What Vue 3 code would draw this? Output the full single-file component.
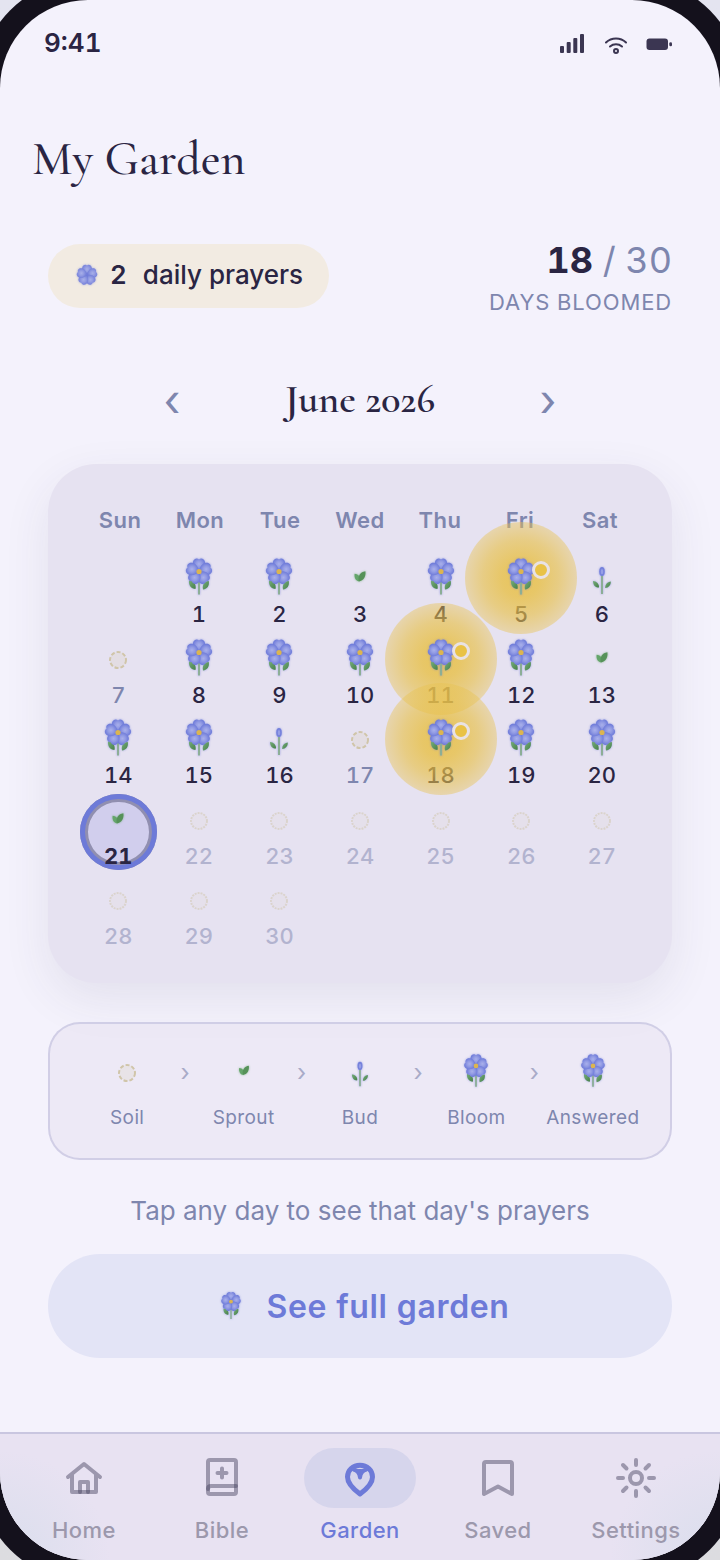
<script setup>
import { ref } from 'vue'

const weekdays = ['Sun', 'Mon', 'Tue', 'Wed', 'Thu', 'Fri', 'Sat']
const stages = [
  'bloom', 'bloom', 'sprout', 'bloom', 'answered', 'bud', 'soil', 'bloom', 'bloom', 'bloom',
  'answered', 'bloom', 'sprout', 'bloom', 'bloom', 'bud', 'soil', 'answered', 'bloom', 'bloom',
  'sprout'
]
const today = 21
const days = Array.from({ length: 30 }, (_, i) => ({
  number: i + 1,
  stage: stages[i] || 'future'
}))
const legend = [
  { stage: 'soil', label: 'Soil' },
  { stage: 'sprout', label: 'Sprout' },
  { stage: 'bud', label: 'Bud' },
  { stage: 'bloom', label: 'Bloom' },
  { stage: 'bloom', label: 'Answered' }
]
const tabs = ['Home', 'Bible', 'Garden', 'Saved', 'Settings']
const active = ref('Garden')
const symbolFor = (stage) => (stage === 'answered' ? 'bloom' : stage)
const isEmpty = (stage) => stage === 'soil' || stage === 'future'
</script>

<template>
  <div class="screen">
    <svg class="defs" width="0" height="0" aria-hidden="true">
      <defs>
        <radialGradient id="petal-fill" gradientUnits="userSpaceOnUse" cx="0" cy="-7.5" r="6.5">
          <stop offset="0" stop-color="#a9b0eb" />
          <stop offset="0.45" stop-color="#929be4" />
          <stop offset="1" stop-color="#6b78d8" />
        </radialGradient>
        <linearGradient id="leaf-fill" x1="0" y1="0" x2="1" y2="1">
          <stop offset="0" stop-color="#76ad7a" />
          <stop offset="1" stop-color="#478049" />
        </linearGradient>
        <path id="petal" fill="url(#petal-fill)" d="M0 0C-4-2-7-5.500-6-9.500C-5.400-12.600-2-13.900 0-12C2-13.900 5.400-12.600 6-9.500C7-5.500 4-2 0 0Z" />
        <g id="blossom">
          <use href="#petal" />
          <use href="#petal" transform="rotate(72)" />
          <use href="#petal" transform="rotate(144)" />
          <use href="#petal" transform="rotate(216)" />
          <use href="#petal" transform="rotate(288)" />
        </g>
        <symbol id="bloom" viewBox="0 0 40 40">
          <path d="M20 24V38.500" stroke="#8cae96" stroke-width="2" />
          <path d="M16.500 33C12 33 9.500 29 10 24.500C14.500 25 17.500 28 16.500 33Z" fill="url(#leaf-fill)" />
          <path d="M24 33.500C28.500 33 30.500 29.500 29.800 25C25.500 25.500 23 28.500 24 33.500Z" fill="url(#leaf-fill)" />
          <use href="#blossom" transform="translate(20 15.500)" />
          <circle cx="20" cy="15.500" r="2.600" fill="#dcb550" />
        </symbol>
        <symbol id="bud" viewBox="0 0 40 40">
          <path d="M20 18V38" stroke="#8cae96" stroke-width="2" />
          <path d="M17 31.500C13.500 32 11 29 11 25C14.500 25 17.300 28 17 31.500Z" fill="url(#leaf-fill)" />
          <path d="M23.200 32C26.500 32 29 29 28.800 25.500C25.500 25.800 23 28.500 23.200 32Z" fill="url(#leaf-fill)" />
          <ellipse cx="20" cy="15.500" rx="2.800" ry="4.600" fill="#7682dc" />
          <ellipse cx="20" cy="15.700" rx="1.200" ry="2.600" fill="#979fe6" />
        </symbol>
        <symbol id="sprout" viewBox="0 0 40 40">
          <path d="M19.600 25.500C16 25.500 14 22 14.600 17.800C18.500 18 20.700 21 19.600 25.500Z" fill="#65a56b" />
          <path d="M18.800 25.300C17.500 20 20.500 16 25.400 15.300C26 20.500 23.800 25 18.800 25.300Z" fill="#569259" />
        </symbol>
      </defs>
    </svg>

    <header class="status">
      <span class="clock">9:41</span>
      <span class="signals" aria-hidden="true">
        <svg width="24" height="20" viewBox="0 0 24 20" fill="#3b3652">
          <rect x="0" y="12" width="4" height="7" rx="1" />
          <rect x="6.700" y="8" width="4" height="11" rx="1" />
          <rect x="13.300" y="4" width="4" height="15" rx="1" />
          <rect x="20" y="0" width="4" height="19" rx="1" />
        </svg>
        <svg width="24" height="20" viewBox="0 0 24 20" fill="none" stroke="#3b3652" stroke-width="2" stroke-linecap="round">
          <path d="M3 8.500C8.500 3.200 17.500 3.200 23 8.500" />
          <path d="M7 12.500C10.500 9.500 15.500 9.500 19 12.500" />
          <circle cx="13" cy="17" r="2" />
        </svg>
        <svg width="26" height="20" viewBox="0 0 26 20" fill="#3b3652">
          <rect x="0.500" y="4.500" width="21.500" height="11.500" rx="3" />
          <rect x="23.300" y="8.200" width="2.700" height="4" rx="1.300" />
        </svg>
      </span>
    </header>

    <main class="content">
      <h1>My Garden</h1>

      <section class="summary">
        <p class="pill">
          <svg class="plant-icon" width="22" height="22" viewBox="-14 -14 28 28" aria-hidden="true"><use href="#blossom" opacity="0.9" /></svg>
          <strong>2</strong>
          <span>daily prayers</span>
        </p>
        <p class="bloomed">
          <span class="count"><strong>18</strong> / 30</span>
          <span class="caption">DAYS BLOOMED</span>
        </p>
      </section>

      <div class="month">
        <button type="button" aria-label="Previous month">‹</button>
        <h2>June 2026</h2>
        <button type="button" aria-label="Next month">›</button>
      </div>

      <section class="calendar">
        <div class="weekdays">
          <span v-for="name in weekdays" :key="name">{{ name }}</span>
        </div>
        <div class="days">
          <span></span>
          <button
            v-for="day in days"
            :key="day.number"
            type="button"
            class="day"
            :class="[day.stage, { today: day.number === today }]"
          >
            <span class="plant">
              <i v-if="day.stage === 'answered'" class="glow"></i>
              <svg v-if="isEmpty(day.stage)" class="soil-icon" :class="day.stage" width="20" height="20" viewBox="0 0 20 20">
                <circle cx="10" cy="10" r="8" />
              </svg>
              <svg v-else class="plant-icon" width="40" height="40"><use :href="'#' + symbolFor(day.stage)" /></svg>
              <i v-if="day.stage === 'answered'" class="badge"></i>
            </span>
            <span class="number">{{ day.number }}</span>
          </button>
        </div>
      </section>

      <section class="legend">
        <template v-for="(item, index) in legend" :key="item.label">
          <span v-if="index" class="arrow" aria-hidden="true">›</span>
          <div class="stage" :class="item.stage">
            <span class="stage-icon">
              <svg v-if="item.stage === 'soil'" class="soil-icon soil" width="20" height="20" viewBox="0 0 20 20">
                <circle cx="10" cy="10" r="8" />
              </svg>
              <svg v-else class="plant-icon" width="36" height="36"><use :href="'#' + item.stage" /></svg>
            </span>
            <span>{{ item.label }}</span>
          </div>
        </template>
      </section>

      <p class="hint">Tap any day to see that day's prayers</p>

      <button type="button" class="full">
        <svg class="plant-icon" width="30" height="30" aria-hidden="true"><use href="#bloom" /></svg>
        <span>See full garden</span>
      </button>
    </main>

    <nav class="tabs">
      <a v-for="tab in tabs" :key="tab" href="#" :class="{ active: tab === active }" @click.prevent="active = tab">
        <span class="tab-icon">
          <svg width="40" height="40" viewBox="0 0 40 40">
            <template v-if="tab === 'Home'">
              <path d="M4 19L20 6L36 19M8 16V34H32V16" />
              <path d="M16 34V24H24V34" />
            </template>
            <template v-else-if="tab === 'Bible'">
              <path d="M8 2H32Q34 2 34 4V34Q34 36 32 36H8Q6 36 6 34V4Q6 2 8 2Z" />
              <path d="M6 31Q6 28 9 28H34M20 10.500V19.500M15.500 15H24.500" />
            </template>
            <template v-else-if="tab === 'Garden'">
              <path stroke-width="5" d="M20 36C12.500 30.500 7.500 25.500 7.500 19C7.500 12 13 7.300 20 7.300C27 7.300 32.500 12 32.500 19C32.500 25.500 27.500 30.500 20 36Z" />
              <path stroke-width="4" d="M20 19.500C19.500 15.500 17.500 12.300 13.500 11.500M20 19.500C20.500 15.500 22.500 12.300 26.500 11.500M18.500 13H21.500" />
            </template>
            <template v-else-if="tab === 'Saved'">
              <path d="M8 4H32Q34 4 34 6V36L20 28.500L6 36V6Q6 4 8 4Z" />
            </template>
            <template v-else>
              <circle cx="20" cy="20" r="6" />
              <path d="M20 2V7M20 33V38M2 20H7M33 20H38M7 7L10.500 10.500M29.500 29.500L33 33M7 33L10.500 29.500M29.500 10.500L33 7" />
            </template>
          </svg>
        </span>
        <span>{{ tab }}</span>
      </a>
    </nav>
  </div>
</template>

<style>
body {
  background: linear-gradient(#e4e4f0, #dcdce0);
}
</style>

<style scoped>
.screen {
  --ink: #2a2543;
  --muted: #7e86ae;
  --accent: #6d7ad8;
  box-sizing: border-box;
  display: flex;
  flex-direction: column;
  min-height: 100vh;
  overflow: hidden;
  border-radius: 88px;
  background: #f4f2fc;
  box-shadow: 0 0 0 22px #14111c;
  color: var(--ink);
  font-family: Inter, "Liberation Sans", sans-serif;
  font-variant-numeric: tabular-nums;
}
.defs {
  position: absolute;
}
h1,
h2,
p {
  margin: 0;
}
h1,
h2 {
  font-family: "Cormorant Garamond", "Liberation Serif", serif;
  font-variant-numeric: normal;
}
button {
  padding: 0;
  border: 0;
  background: none;
  color: inherit;
  font: inherit;
  font-variant-numeric: inherit;
  cursor: pointer;
}
.status {
  display: flex;
  justify-content: space-between;
  align-items: center;
  height: 84px;
  padding: 0 48px 0 44px;
}
.clock {
  font-size: 26px;
  font-weight: 600;
}
.signals {
  display: flex;
  gap: 19px;
  margin-top: 3px;
}
.content {
  display: flex;
  flex-direction: column;
  padding: 45px 48px 74px;
}
h1 {
  margin-left: -16px;
  font-size: 48px;
  font-weight: 500;
  line-height: 60px;
}
.summary {
  display: flex;
  justify-content: space-between;
  align-items: center;
  height: 80px;
  margin-top: 47px;
}
.pill {
  box-sizing: border-box;
  display: flex;
  align-items: center;
  height: 64px;
  padding: 0 26px 3px 28px;
  border-radius: 32px;
  background: #f2ebe2;
  font-size: 26px;
  font-weight: 500;
}
.pill strong {
  margin: 0 16px 0 12px;
  font-weight: 600;
}
.bloomed {
  display: flex;
  flex-direction: column;
  align-items: flex-end;
  color: var(--muted);
}
.count {
  font-size: 36px;
  line-height: 52px;
}
.count strong {
  color: var(--ink);
  font-weight: 700;
}
.caption {
  font-size: 22px;
  line-height: 32px;
  letter-spacing: 0.04em;
}
.month {
  display: flex;
  justify-content: space-between;
  align-items: center;
  height: 64px;
  margin-top: 52px;
  padding: 0 92px;
}
.month h2 {
  padding-bottom: 2px;
  font-size: 40px;
  font-weight: 600;
  line-height: 48px;
}
.month button {
  width: 64px;
  height: 64px;
  color: var(--muted);
  font-size: 44px;
  line-height: 60px;
}
.calendar {
  margin-top: 32px;
  padding: 32px;
  border-radius: 48px;
  background: #e6e2f1;
  box-shadow: 0 16px 48px rgba(60, 55, 90, 0.09);
}
.weekdays {
  display: grid;
  grid-template-columns: repeat(7, 1fr);
  height: 56px;
  color: var(--muted);
  font-size: 22px;
  font-weight: 600;
  line-height: 48px;
  letter-spacing: 0.02em;
  text-align: center;
}
.days {
  display: grid;
  grid-template-columns: repeat(7, 1fr);
  gap: 4px;
}
.day {
  box-sizing: border-box;
  display: flex;
  flex-direction: column;
  align-items: center;
  aspect-ratio: 1;
  padding-top: 4px;
  border-radius: 50%;
  font-size: 22px;
  font-weight: 500;
}
.plant {
  position: relative;
  display: flex;
  justify-content: center;
  width: 40px;
  height: 40px;
}
.plant-icon {
  position: relative;
  z-index: 2;
  overflow: visible;
  filter: drop-shadow(0 0 1px rgba(109, 122, 216, 0.6));
}
.sprout .plant-icon {
  filter: drop-shadow(0 0 1px rgba(90, 160, 96, 0.6));
}
.soil-icon {
  margin-top: 13px;
  fill: rgba(214, 203, 175, 0.2);
  stroke: #d0c5a9;
  stroke-width: 2;
}
.soil-icon.soil {
  stroke-dasharray: 4 2;
}
.soil-icon.future {
  stroke-dasharray: 2 1;
  opacity: 0.5;
}
.number {
  line-height: 28px;
  margin-top: 4px;
}
.day.soil .number {
  color: var(--muted);
}
.day.future .number {
  color: #b2b3cf;
}
.glow {
  position: absolute;
  top: -34px;
  left: -36px;
  z-index: 1;
  width: 112px;
  height: 112px;
  border-radius: 50%;
  background: radial-gradient(circle closest-side, rgba(232, 192, 70, 0.88) 0, rgba(232, 192, 70, 0.8) 35%, rgba(232, 193, 74, 0.65) 68%, rgba(232, 194, 80, 0.42) 100%);
  pointer-events: none;
}
.badge {
  position: absolute;
  top: 5px;
  right: -9px;
  z-index: 3;
  box-sizing: border-box;
  width: 18px;
  height: 18px;
  border: 3px solid #e9e2e4;
  border-radius: 50%;
  background: #e9c246;
}
.today {
  background: #d1ceed;
  box-shadow: inset 0 0 0 5px var(--accent), inset 0 0 0 8px #918fb0;
}
.today .number {
  font-weight: 700;
}
.legend {
  display: flex;
  margin-top: 39px;
  padding: 28px 24px 27px;
  border: 2px solid rgba(190, 188, 218, 0.6);
  border-radius: 32px;
  background: rgba(232, 226, 242, 0.6);
  color: var(--muted);
  font-size: 19px;
  letter-spacing: 0.02em;
}
.stage {
  display: flex;
  flex: 1 1 0;
  flex-direction: column;
  align-items: center;
  gap: 17px;
  min-width: 0;
  line-height: 26px;
}
.stage-icon {
  display: flex;
  justify-content: center;
  height: 36px;
}
.stage-icon .soil-icon {
  margin-top: 11px;
}
.arrow {
  width: 10px;
  color: #a9abc8;
  font-size: 24px;
  line-height: 42px;
  text-align: center;
}
.hint {
  margin-top: 32px;
  color: var(--muted);
  font-size: 26px;
  font-variant-numeric: normal;
  line-height: 38px;
  text-align: center;
}
.full {
  display: flex;
  justify-content: center;
  align-items: center;
  gap: 20px;
  height: 104px;
  margin-top: 24px;
  padding: 2px 0 0 6px;
  border-radius: 52px;
  background: #e3e4f6;
  color: var(--accent);
  font-size: 32px;
  font-weight: 600;
  letter-spacing: 0.02em;
}
.full svg {
  margin-bottom: 4px;
}
.tabs {
  box-sizing: border-box;
  display: flex;
  height: 128px;
  margin-top: auto;
  padding: 14px 15px 0;
  border-top: 2px solid #c9c6e0;
  background:
    radial-gradient(circle at 0 100%, rgba(222, 223, 238, 0.9) 40px, rgba(222, 223, 238, 0) 110px),
    radial-gradient(circle at 100% 100%, rgba(222, 223, 238, 0.9) 40px, rgba(222, 223, 238, 0) 110px),
    #e8e2f2;
}
.tabs a {
  display: flex;
  flex: 1 1 0;
  flex-direction: column;
  align-items: center;
  gap: 8px;
  color: #9c98ac;
  font-size: 22px;
  font-weight: 500;
  line-height: 28px;
  letter-spacing: 0.02em;
  text-decoration: none;
}
.tab-icon {
  display: flex;
  justify-content: center;
  align-items: center;
  width: 112px;
  height: 60px;
  border-radius: 30px;
}
.tab-icon svg {
  fill: none;
  stroke: rgba(74, 70, 98, 0.48);
  stroke-width: 4;
  stroke-linecap: round;
  stroke-linejoin: round;
}
.tabs .active {
  color: var(--accent);
}
.active .tab-icon {
  background: #d6d5ec;
}
.tabs .active svg {
  stroke: var(--accent);
}
</style>
